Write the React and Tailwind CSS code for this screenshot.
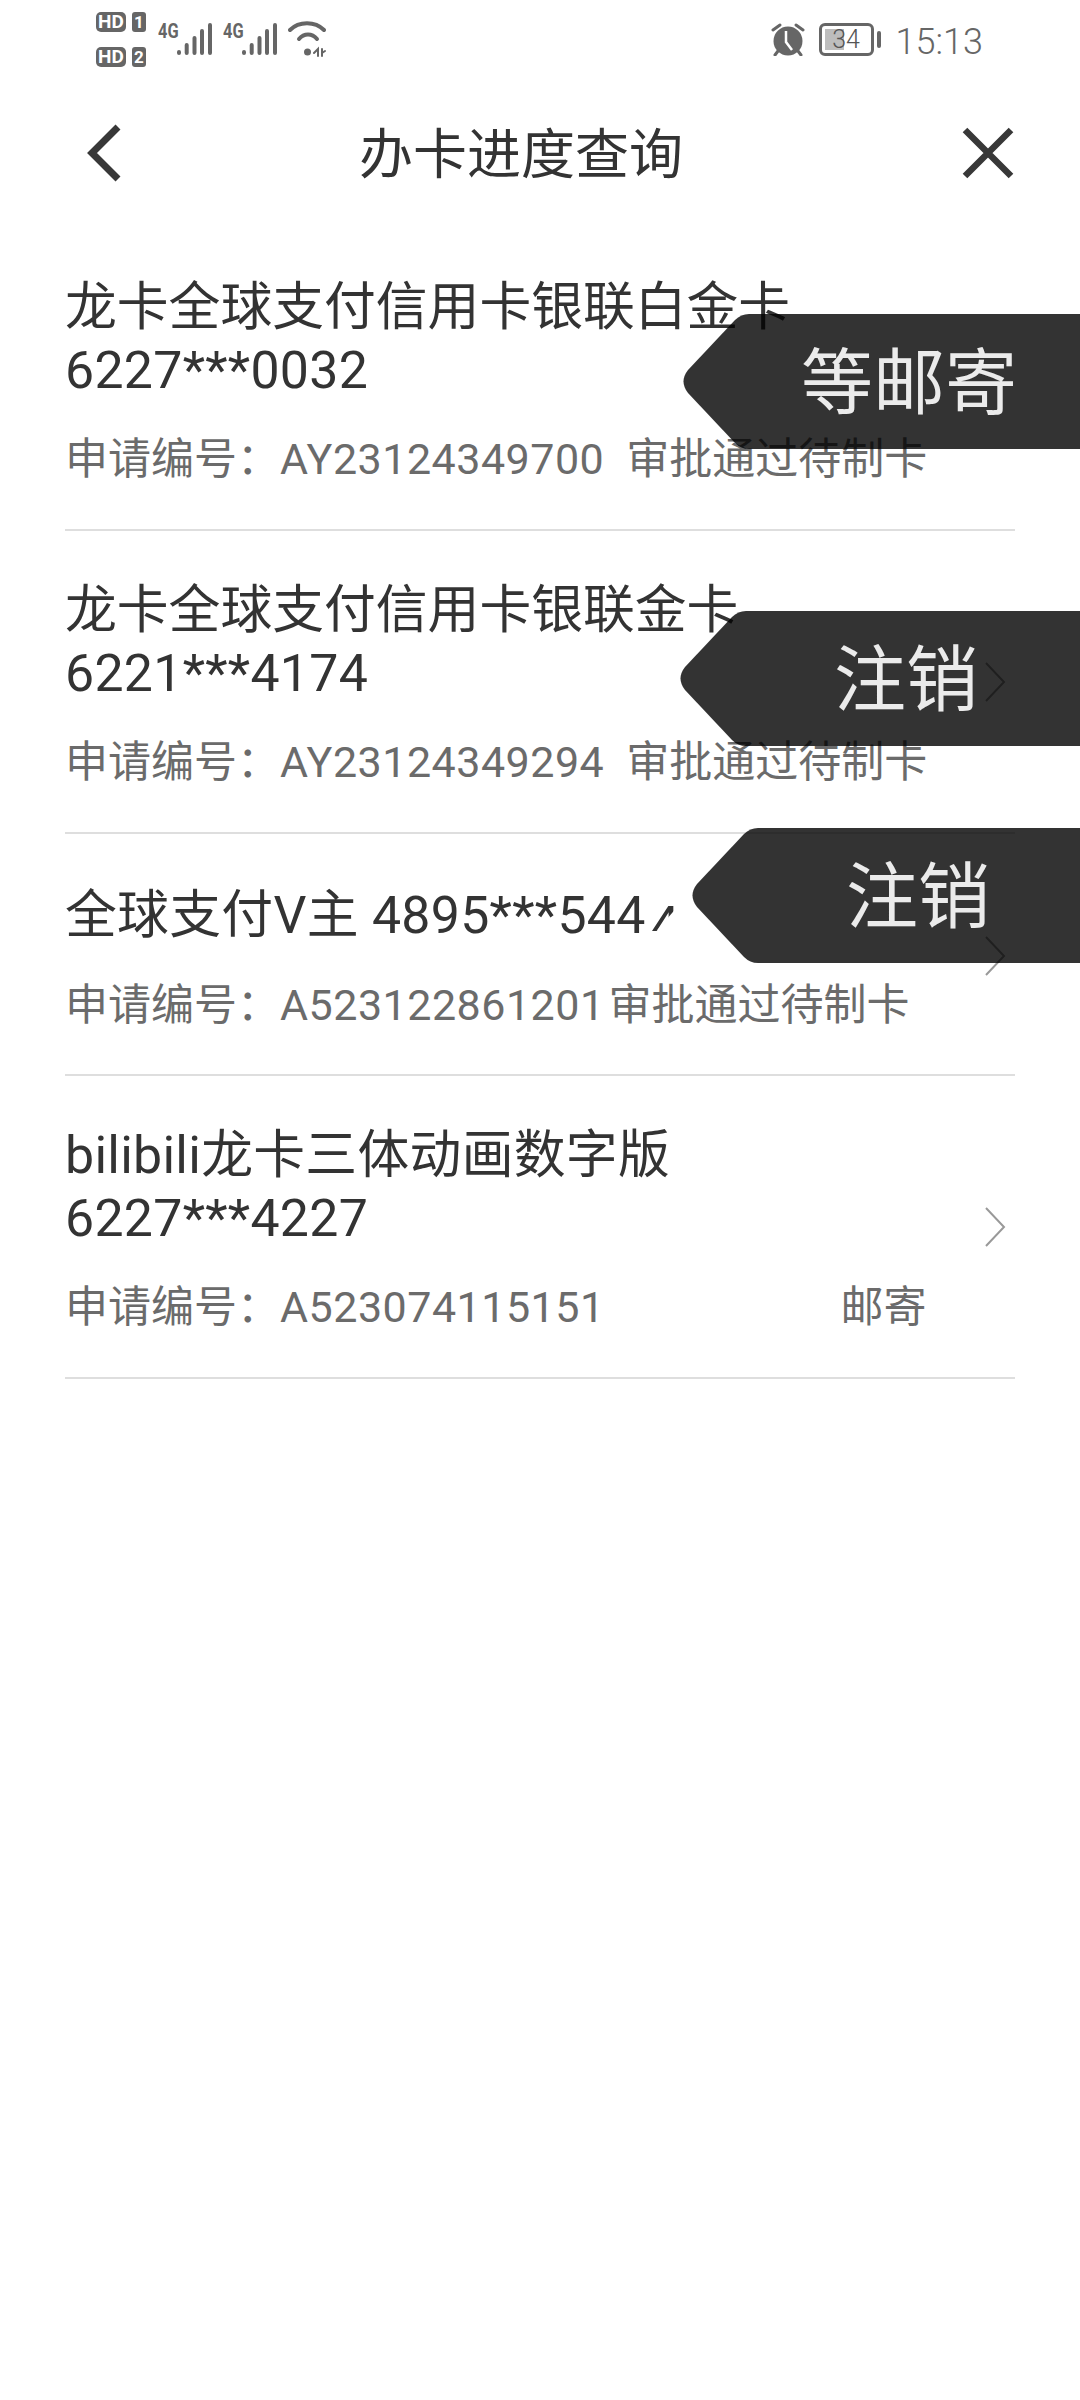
const cards = [
  { title: ['龙卡全球支付信用卡银联白金卡', '6227***0032'], no: 'AY23124349700', status: '审批通过待制卡', statusClass: 'ml-[22px]' },
  { title: ['龙卡全球支付信用卡银联金卡', '6221***4174'], no: 'AY23124349294', status: '审批通过待制卡', statusClass: 'ml-[22px]', arrow: true },
  { title: ['全球支付V主 4895***544'], cut: '4', spaced: true, no: 'A523122861201', status: '审批通过待制卡', statusClass: 'ml-[4px]', arrow: true },
  { title: ['bilibili龙卡三体动画数字版', '6227***4227'], spaced: true, no: 'A523074115151', status: '邮寄', statusClass: 'ml-[236px]', arrow: true },
];

function Signal() {
  return (
    <div className="flex items-start w-[55px]">
      <span className="text-[20px] leading-[18px] font-bold text-[#666] scale-x-[0.82] origin-left w-[19px]">4G</span>
      <svg width="36" height="34" viewBox="0 0 36 34" fill="none" stroke="#666" strokeWidth="4" strokeLinecap="round">
        <path d="M2 30v1M9.7 23v8M17.5 16v15M25 9v22M33 3v28" />
      </svg>
    </div>
  );
}

function StatusBar() {
  return (
    <div className="h-[78px] pl-[96px] pr-[97px] flex justify-between">
      <div className="flex items-start">
        <div className="mt-[12px] flex flex-col gap-[15px] w-[51px]">
          {['1', '2'].map(n => (
            <div key={n} className="flex gap-[6px] h-[20px]">
              <span className="w-[30px] h-[20px] rounded-[5px] bg-[#666] text-white text-[19px] leading-[20px] font-bold text-center">HD</span>
              <span className="w-[14px] h-[20px] rounded-[3px] bg-[#666] text-white text-[17px] leading-[20px] font-bold text-center">{n}</span>
            </div>
          ))}
        </div>
        <div className="mt-[22px] ml-[11px] flex gap-[10px]">
          <Signal />
          <Signal />
        </div>
        <svg className="mt-[21px] ml-[10px]" width="38" height="36" viewBox="0 0 38 36" fill="none" stroke="#666" strokeLinecap="round">
          <path d="M2 9C11 0 27 0 36 9" strokeWidth="4" />
          <path d="M11 18C16 12 24 12 29 18" strokeWidth="4" />
          <circle cx="19.5" cy="31" r="3.5" fill="#666" stroke="none" />
          <path d="M26 32l4-4v7M34 28v7M34 32l3-2" strokeWidth="2" />
        </svg>
      </div>
      <div className="flex items-start">
        <svg className="mt-[23px]" width="36" height="33" viewBox="0 0 36 33">
          <circle cx="18" cy="18" r="14.5" fill="#666" />
          <path d="M3 7l7-5M33 7l-7-5M8 28l-3 4M28 28l3 4" stroke="#666" strokeWidth="3" strokeLinecap="round" />
          <path d="M16 8v11l6 8" stroke="#fff" strokeWidth="2.5" fill="none" />
        </svg>
        <div className="mt-[23px] ml-[13px] relative w-[55px] h-[33px] rounded-[6px] border-[3px] border-[#666] overflow-hidden">
          <div className="absolute left-[3px] top-[3px] w-[19px] h-[21px] bg-[#bdbdbd]" />
          <span className="relative block text-center text-[25px] leading-[27px] text-[#555] font-light">34</span>
        </div>
        <div className="mt-[31px] ml-[3px] w-[4px] h-[17px] rounded-[2px] bg-[#666]" />
        <span className="mt-[22px] ml-[15px] text-[36px] leading-[40px] text-[#666] font-light">15:13</span>
      </div>
    </div>
  );
}

function NavBar() {
  return (
    <div className="h-[150px] pl-[86px] pr-[66px] flex items-center justify-between">
      <svg width="36" height="58" viewBox="0 0 36 58" fill="none" stroke="#383838" strokeWidth="7">
        <path d="M32 3L6 29l26 26" />
      </svg>
      <h1 className="ml-[-42px] mt-[6px] text-[54px] leading-[60px] text-[#333]">办卡进度查询</h1>
      <svg width="52" height="52" viewBox="0 0 52 52" fill="none" stroke="#383838" strokeWidth="6.5">
        <path d="M3 3l46 46M49 3L3 49" />
      </svg>
    </div>
  );
}

function CardRow({ card }) {
  return (
    <div className={`flex items-center border-b-2 border-[#dedede] ${card.cut ? 'pt-[50px] pb-[39px]' : 'pt-[48px] pb-[40px]'}`}>
      <div className="flex-1 min-w-0">
        <div className="text-[51.8px] leading-[63px] text-[#333] whitespace-nowrap">
          {card.title.map((line, i) => (
            <div key={line} className={i === 1 ? 'tracking-[0.3px]' : card.spaced ? 'tracking-[0.3px]' : ''}>
              {line}
              {/* last digit is mostly cut off in the screenshot */}
              {card.cut && (
                <span className="inline-block translate-x-[5px] translate-y-[10px] [clip-path:polygon(16px_10px,24px_10px,24px_16px,6px_37px,0_37px,0_32px)]">{card.cut}</span>
              )}
            </div>
          ))}
        </div>
        <div className={`${card.cut ? 'mt-[28px]' : 'mt-[27px]'} text-[43px] leading-[60px] text-[#6b6b6b] whitespace-nowrap`}>
          <span>申请编号：</span>
          <span className="tracking-[0.5px]">{card.no}</span>
          <span className={card.statusClass}>{card.status}</span>
        </div>
      </div>
      {card.arrow && (
        <svg className="mr-[9px] mb-[8px]" width="22" height="42" viewBox="0 0 22 42" fill="none" stroke="#999" strokeWidth="2">
          <path d="M2 2l18 19L2 40" />
        </svg>
      )}
    </div>
  );
}

function Toast({ label, className, textClass }) {
  return (
    <div className={`absolute right-0 h-[135px] overflow-hidden ${className}`}>
      <svg className="absolute left-0 top-0" width="400" height="135" viewBox="0 0 400 135">
        <path d="M66 0H400V135H66Q58 135 52 129L5 79Q-4 67.5 5 56L52 6Q58 0 66 0Z" fill="rgba(0,0,0,0.8)" />
      </svg>
      <div className={`relative h-full pt-[5px] flex items-center text-[72px] text-white/90 ${textClass}`}>{label}</div>
    </div>
  );
}

export default function App() {
  return (
    <div className="relative w-full min-h-[2400px] bg-white overflow-hidden font-['Roboto','Noto_Sans_CJK_SC',sans-serif]">
      <StatusBar />
      <NavBar />
      <div className="pl-[65px] pr-[65px]">
        {cards.map(card => <CardRow key={card.no} card={card} />)}
      </div>
      <Toast label="等邮寄" className="top-[314px] w-[397px]" textClass="pl-[118px]" />
      <Toast label="注销" className="top-[611px] w-[400px]" textClass="pl-[154px]" />
      <Toast label="注销" className="top-[828px] w-[388px]" textClass="pl-[154px]" />
    </div>
  );
}
